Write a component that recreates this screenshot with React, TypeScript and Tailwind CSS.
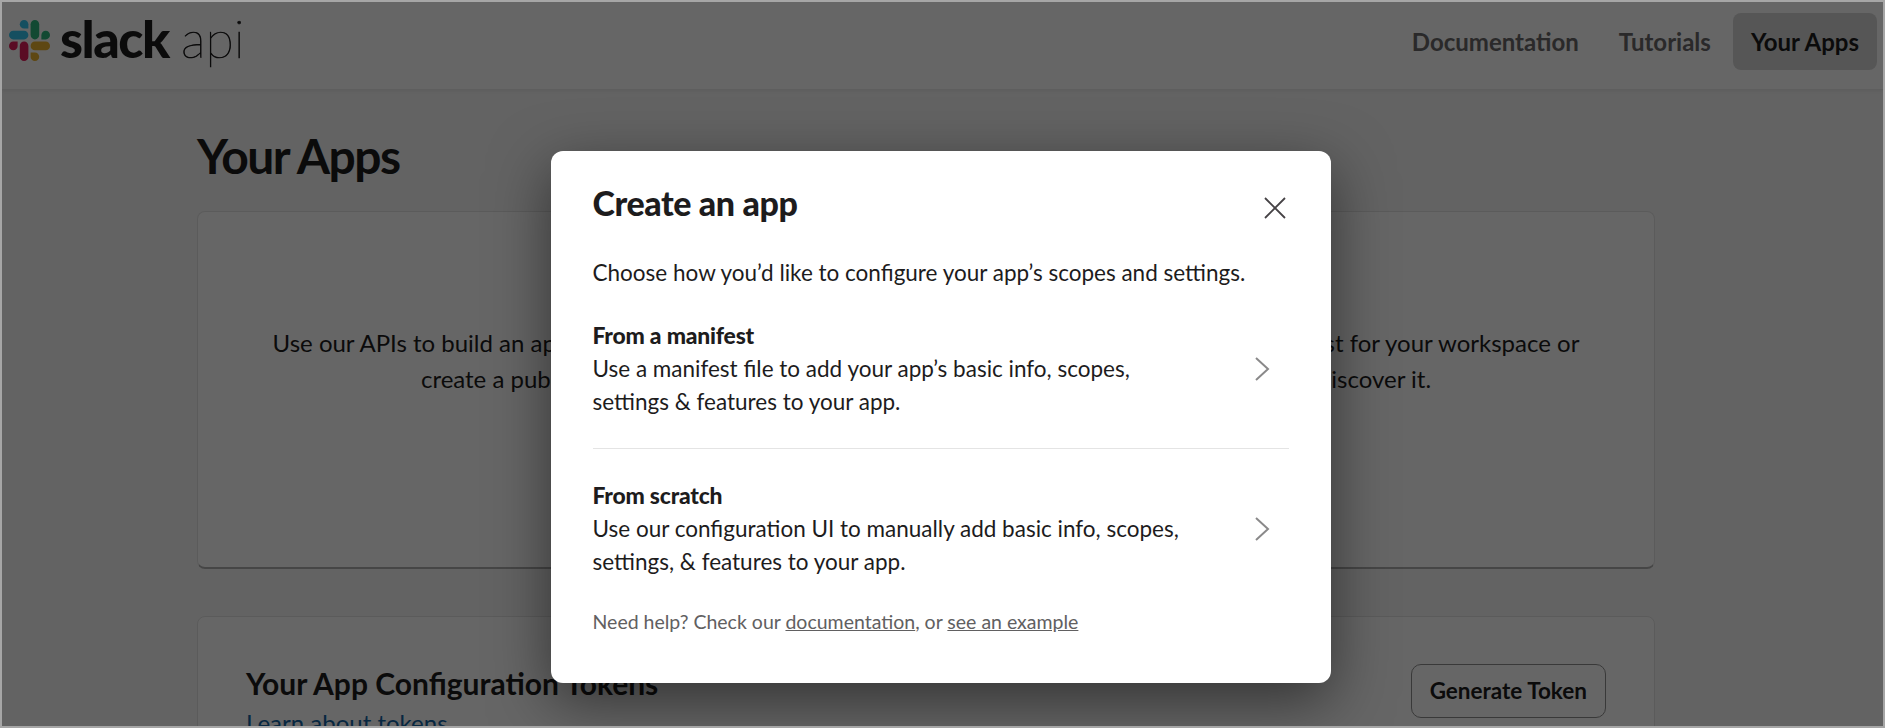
const font = "font-['Lato','Noto_Sans',sans-serif]";

function SlackMark() {
  return (
    <svg viewBox="0 0 122.8 122.8" className="w-[41px] h-[41px] shrink-0">
      <path d="M25.8 77.6c0 7.1-5.8 12.9-12.9 12.9S0 84.7 0 77.6s5.8-12.9 12.9-12.9h12.9v12.9z" fill="#e01e5a" />
      <path d="M32.3 77.6c0-7.1 5.8-12.9 12.9-12.9s12.9 5.8 12.9 12.9v32.3c0 7.1-5.8 12.9-12.9 12.9s-12.9-5.8-12.9-12.9V77.6z" fill="#e01e5a" />
      <path d="M45.2 25.8c-7.1 0-12.9-5.8-12.9-12.9S38.1 0 45.2 0s12.9 5.8 12.9 12.9v12.9H45.2z" fill="#36c5f0" />
      <path d="M45.2 32.3c7.1 0 12.9 5.8 12.9 12.9s-5.8 12.9-12.9 12.9H12.9C5.8 58.1 0 52.3 0 45.2s5.8-12.9 12.9-12.9h32.3z" fill="#36c5f0" />
      <path d="M97 45.2c0-7.1 5.8-12.9 12.9-12.9s12.9 5.8 12.9 12.9-5.8 12.9-12.9 12.9H97V45.2z" fill="#2eb67d" />
      <path d="M90.5 45.2c0 7.1-5.8 12.9-12.9 12.9s-12.9-5.8-12.9-12.9V12.9C64.7 5.8 70.5 0 77.6 0s12.9 5.8 12.9 12.9v32.3z" fill="#2eb67d" />
      <path d="M77.6 97c7.1 0 12.9 5.8 12.9 12.9s-5.8 12.9-12.9 12.9-12.9-5.8-12.9-12.9V97h12.9z" fill="#ecb22e" />
      <path d="M77.6 90.5c-7.1 0-12.9-5.8-12.9-12.9s5.8-12.9 12.9-12.9h32.3c7.1 0 12.9 5.8 12.9 12.9s-5.8 12.9-12.9 12.9H77.6z" fill="#ecb22e" />
    </svg>
  );
}

function Chevron() {
  return (
    <svg viewBox="0 0 16 24" className="w-[16px] h-[24px] shrink-0 mr-[19px]" fill="none" stroke="#8a898a" strokeWidth="2">
      <path d="M2 1l12 11L2 23" />
    </svg>
  );
}

function OptionRow({ title, lines }: { title: string; lines: string[] }) {
  return (
    <div className="flex items-center justify-between">
      <div>
        <div className="text-[22.9px] leading-[33px] font-black text-[#1d1c1d] tracking-[-0.2px]">{title}</div>
        {lines.map((l) => (
          <div key={l} className="text-[22.5px] leading-[33px] text-[#1d1c1d]">{l}</div>
        ))}
      </div>
      <Chevron />
    </div>
  );
}

export default function App() {
  return (
    <div className={`relative h-screen overflow-hidden border-2 border-[#a6a6a6] bg-[#f8f8f8] ${font}`}>
      <header className="flex items-center justify-between h-[88px] pb-[10px] pl-[7px] pr-[6px] bg-white border-b border-[#ececec] shadow-[0_1px_4px_rgba(0,0,0,0.08)]">
        <div className="flex items-center">
          <SlackMark />
          <div className="flex items-baseline mb-[6px]">
            <span className="ml-[10px] text-[52px] leading-none font-black text-[#1d1c1d] tracking-[-1.5px]">slack</span>
            <span className="ml-[12px] text-[52px] leading-none font-thin text-[#1d1c1d] [-webkit-text-stroke:0.7px_#1d1c1d]">api</span>
          </div>
        </div>
        <nav className="flex items-center gap-[4px] text-[24px] leading-[37px] font-bold mt-[2px]">
          <a className="px-[18px] py-[10px] text-[#696869]">Documentation</a>
          <a className="px-[18px] py-[10px] text-[#696869]">Tutorials</a>
          <a className="px-[18px] py-[10px] rounded-lg bg-[#d8d8d8] text-[#1d1c1d]">Your Apps</a>
        </nav>
      </header>

      <main className="pl-[195px] w-[1653px]">
        <h1 className="mt-[36px] text-[48px] leading-[60px] font-bold text-[#1d1c1d] tracking-[-1.5px]">Your Apps</h1>
        <section className="mt-[25px] h-[358px] rounded-lg bg-white border border-[#e4e4e4] border-b-2 border-b-[#b0b0b0] flex flex-col items-center pt-[113px]">
          <p className="w-[1320px] text-center text-[24px] leading-[36px] text-[#1d1c1d]">
            Use our APIs to build an app that makes people’s working lives better. You can create an app that’s just for your workspace or create a public Slack App to list in the App Directory, where everyone using Slack can discover it.
          </p>
        </section>
        <section className="mt-[47px] rounded-lg bg-white border border-[#e4e4e4] flex justify-between pt-[46px] px-[48px] pb-[40px]">
          <div>
            <h2 className="text-[30px] leading-[40px] font-bold text-[#1d1c1d]">Your App Configuration Tokens</h2>
            <a className="block mt-[2px] text-[24px] leading-[36px] text-[#1264a3]">Learn about tokens</a>
          </div>
          <button className="h-[54px] mt-[1px] px-[18px] rounded-[10px] border border-[#8f8f8f] text-[22.5px] font-bold text-[#1d1c1d]">Generate Token</button>
        </section>
      </main>

      {/* Modal */}
      <div className="absolute inset-0 bg-black/60 flex justify-center items-start pt-[149px] pr-[4px]">
        <div className="w-[780px] h-[532px] rounded-xl bg-white shadow-[0_18px_60px_rgba(0,0,0,0.5)] px-[42px] pt-[30px]">
          <div className="flex items-start justify-between">
            <h2 className="text-[34px] leading-[44px] font-black text-[#1d1c1d] tracking-[-0.4px]">Create an app</h2>
            <svg viewBox="0 0 22 22" className="w-[22px] h-[22px] mt-[16px] mr-[3px]" fill="none" stroke="#454245" strokeWidth="1.8">
              <path d="M1 1l20 20M21 1L1 21" />
            </svg>
          </div>
          <p className="mt-[31px] text-[22.5px] leading-[33px] text-[#1d1c1d]">Choose how you’d like to configure your app’s scopes and settings.</p>
          <div className="mt-[30px]">
            <OptionRow title="From a manifest" lines={["Use a manifest file to add your app’s basic info, scopes,", "settings & features to your app."]} />
          </div>
          <div className="mt-[30px] border-t border-[#e4e4e4] pt-[30px]">
            <OptionRow title="From scratch" lines={["Use our configuration UI to manually add basic info, scopes,", "settings, & features to your app."]} />
          </div>
          <p className="mt-[29px] text-[19.5px] leading-[29px] text-[#616061]">
            Need help? Check our <a className="underline">documentation</a>, or <a className="underline">see an example</a>
          </p>
        </div>
      </div>
    </div>
  );
}
